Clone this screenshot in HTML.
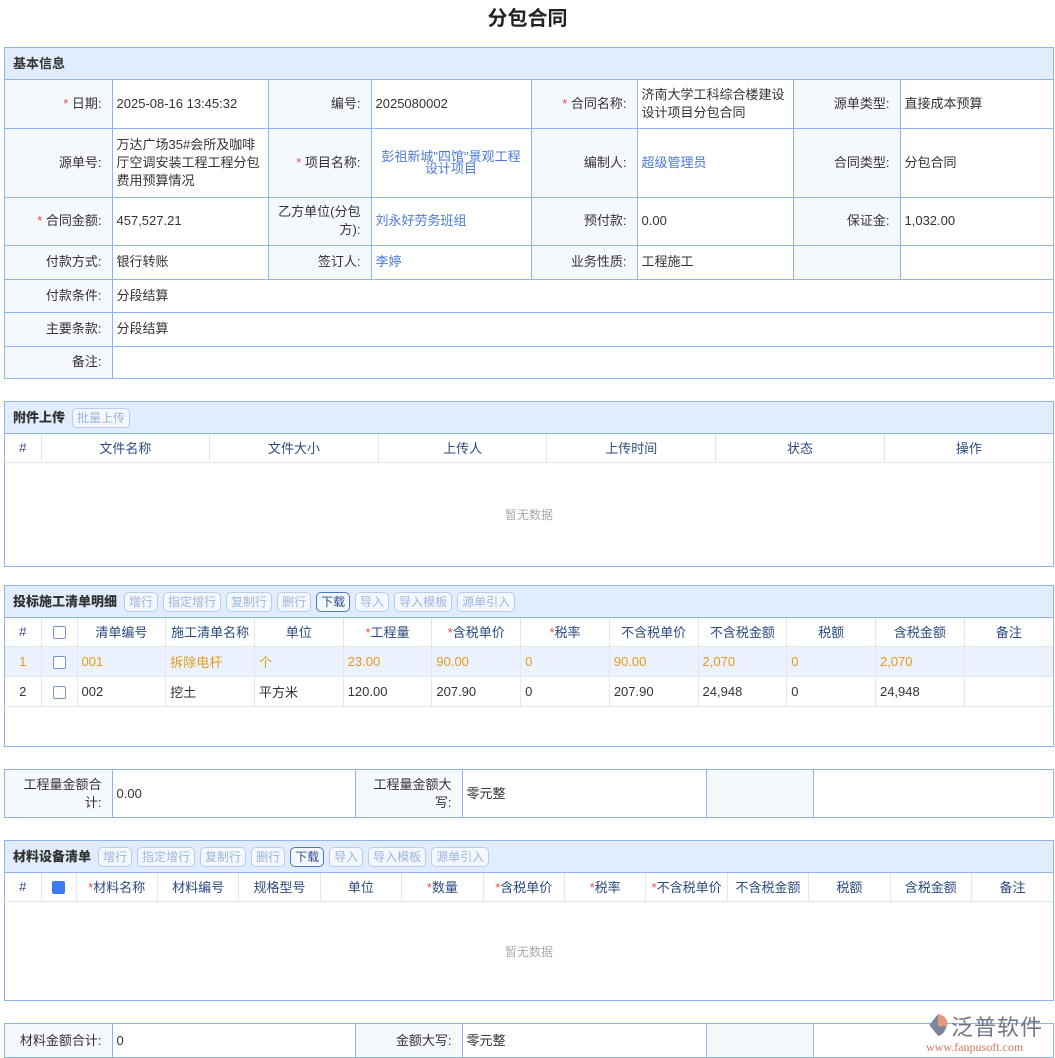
<!DOCTYPE html>
<html><head><meta charset="utf-8"><style>
*{box-sizing:border-box;margin:0;padding:0}
body{width:1055px;height:1058px;background:#fff;font-family:"Liberation Sans","Noto Sans CJK SC",sans-serif;font-size:13px;color:#333;position:relative;overflow:hidden}
.title{position:absolute;top:2px;left:0;width:1055px;text-align:center;font-size:20px;font-weight:bold;color:#222}
.box{position:absolute;left:4px;width:1050px;border:1px solid #8fb4ef}
.hd{height:32px;background:#e1ecfd;border-bottom:1px solid #8fb4ef;font-weight:bold;font-size:13px;padding-left:8px;line-height:31px;display:flex;align-items:center;gap:5px}
.hd b{margin-right:2px}
.btn{font-weight:normal;font-size:12px;color:#9bb6e0;border:1px solid #b6cdf0;border-radius:5px;height:20px;line-height:18px;padding:0 4px;background:#f4f8fe}
.btn.on{color:#2c4f88;border-color:#4d79c2}
table{border-collapse:collapse;table-layout:fixed;width:100%}
.f td{border:1px solid #8fb4ef;padding:0 4px;line-height:18px}
.f tr:first-child td{border-top:none}
.f tr:last-child td{border-bottom:none}
.f td:first-child{border-left:none}
.f td:last-child{border-right:none}
.f td.l{background:#f5f8fd;text-align:right;padding-right:10px}
.s{color:#f04848}
.bl{color:#4b7bd8}
.g th,.g td{border:1px solid #e3e6ea;font-weight:normal;padding:0 4px;text-align:left}
.g th{color:#2c4a80;text-align:center;height:28px}
.g tr th:first-child,.g tr td:first-child{border-left:none}
.g tr th:last-child,.g tr td:last-child{border-right:none}
.g tr:first-child th{border-top:none}
.g td{height:30px}
.o td{background:#ebf2fe;color:#e49a1c}
.cb{display:inline-block;width:13px;height:13px;border:1px solid #7894cc;border-radius:2px;vertical-align:middle;background:#fff}
.g td.empty{text-align:center;color:#aaa;font-size:12px;border:none}
</style></head><body>
<div class="title">分包合同</div>

<div class="box" style="top:47px;height:332px">
<div class="hd">基本信息</div>
<table class="f">
<colgroup><col style="width:107px"><col style="width:156px"><col style="width:103px"><col style="width:160px"><col style="width:106px"><col style="width:156px"><col style="width:107px"><col></colgroup>
<tr style="height:48px"><td class="l"><span class="s">* </span>日期:</td><td>2025-08-16 13:45:32</td><td class="l">编号:</td><td>2025080002</td><td class="l"><span class="s">* </span>合同名称:</td><td>济南大学工科综合楼建设设计项目分包合同</td><td class="l">源单类型:</td><td>直接成本预算</td></tr>
<tr style="height:69px"><td class="l">源单号:</td><td>万达广场35#会所及咖啡厅空调安装工程工程分包费用预算情况</td><td class="l"><span class="s">* </span>项目名称:</td><td class="bl" style="text-align:center;line-height:12px">彭祖新城"四馆"景观工程设计项目</td><td class="l">编制人:</td><td class="bl">超级管理员</td><td class="l">合同类型:</td><td>分包合同</td></tr>
<tr style="height:48px"><td class="l"><span class="s">* </span>合同金额:</td><td>457,527.21</td><td class="l">乙方单位(分包方):</td><td class="bl">刘永好劳务班组</td><td class="l">预付款:</td><td>0.00</td><td class="l">保证金:</td><td>1,032.00</td></tr>
<tr style="height:34px"><td class="l">付款方式:</td><td>银行转账</td><td class="l">签订人:</td><td class="bl">李婷</td><td class="l">业务性质:</td><td>工程施工</td><td class="l"></td><td></td></tr>
<tr style="height:33px"><td class="l">付款条件:</td><td colspan="7">分段结算</td></tr>
<tr style="height:34px"><td class="l">主要条款:</td><td colspan="7">分段结算</td></tr>
<tr style="height:32px"><td class="l">备注:</td><td colspan="7"></td></tr>
</table></div>

<div class="box" style="top:401px;height:166px">
<div class="hd"><b>附件上传</b><span class="btn">批量上传</span></div>
<table class="g"><colgroup><col style="width:36px"><col><col><col><col><col><col></colgroup>
<tr><th>#</th><th>文件名称</th><th>文件大小</th><th>上传人</th><th>上传时间</th><th>状态</th><th>操作</th></tr>
<tr><td colspan="7" class="empty" style="height:104px">暂无数据</td></tr></table></div>

<div class="box" style="top:585px;height:162px">
<div class="hd"><b>投标施工清单明细</b><span class="btn">增行</span><span class="btn">指定增行</span><span class="btn">复制行</span><span class="btn">删行</span><span class="btn on">下载</span><span class="btn">导入</span><span class="btn">导入模板</span><span class="btn">源单引入</span></div>
<table class="g"><colgroup><col style="width:36px"><col style="width:36px"><col><col><col><col><col><col><col><col><col><col><col></colgroup>
<tr><th>#</th><th><span class="cb"></span></th><th>清单编号</th><th>施工清单名称</th><th>单位</th><th><span class="s">*</span>工程量</th><th><span class="s">*</span>含税单价</th><th><span class="s">*</span>税率</th><th>不含税单价</th><th>不含税金额</th><th>税额</th><th>含税金额</th><th>备注</th></tr>
<tr class="o"><td style="text-align:center">1</td><td style="text-align:center"><span class="cb"></span></td><td>001</td><td>拆除电杆</td><td>个</td><td>23.00</td><td>90.00</td><td>0</td><td>90.00</td><td>2,070</td><td>0</td><td>2,070</td><td></td></tr>
<tr><td style="text-align:center">2</td><td style="text-align:center"><span class="cb"></span></td><td>002</td><td>挖土</td><td>平方米</td><td>120.00</td><td>207.90</td><td>0</td><td>207.90</td><td>24,948</td><td>0</td><td>24,948</td><td></td></tr>
</table></div>

<div class="box" style="top:769px;height:49px">
<table class="f"><colgroup><col style="width:107px"><col style="width:243px"><col style="width:107px"><col style="width:244px"><col style="width:107px"><col></colgroup>
<tr style="height:47px"><td class="l">工程量金额合计:</td><td>0.00</td><td class="l">工程量金额大写:</td><td>零元整</td><td class="l"></td><td></td></tr></table></div>

<div class="box" style="top:840px;height:161px">
<div class="hd"><b>材料设备清单</b><span class="btn">增行</span><span class="btn">指定增行</span><span class="btn">复制行</span><span class="btn">删行</span><span class="btn on">下载</span><span class="btn">导入</span><span class="btn">导入模板</span><span class="btn">源单引入</span></div>
<table class="g"><colgroup><col style="width:36px"><col style="width:35px"><col><col><col><col><col><col><col><col><col><col><col><col></colgroup>
<tr><th>#</th><th><span class="cb" style="background:#3d7cf0;border-color:#3d7cf0"></span></th><th><span class="s">*</span>材料名称</th><th>材料编号</th><th>规格型号</th><th>单位</th><th><span class="s">*</span>数量</th><th><span class="s">*</span>含税单价</th><th><span class="s">*</span>税率</th><th><span class="s">*</span>不含税单价</th><th>不含税金额</th><th>税额</th><th>含税金额</th><th>备注</th></tr>
<tr><td colspan="14" class="empty" style="height:100px">暂无数据</td></tr></table></div>

<div class="box" style="top:1023px;height:35px">
<table class="f"><colgroup><col style="width:107px"><col style="width:243px"><col style="width:107px"><col style="width:244px"><col style="width:107px"><col></colgroup>
<tr style="height:33px"><td class="l">材料金额合计:</td><td>0</td><td class="l">金额大写:</td><td>零元整</td><td class="l"></td><td></td></tr></table></div>

<div style="position:absolute;left:926px;top:1010px;width:129px;height:46px">
<svg width="24" height="24" style="position:absolute;left:0;top:3px" viewBox="0 0 22 22"><path d="M11 1 L3 11 L11 21 Z" fill="#7d8598"/><path d="M11 1 C18 2 21 8 19 12 L11 12 Z" fill="#e4997a"/><path d="M11 12 L19 12 C17 18 14 21 11 21 Z" fill="#7d8598"/></svg>
<div style="position:absolute;left:25px;top:0;font-size:22px;color:#6f7585;letter-spacing:1px;white-space:nowrap">泛普软件</div>
<div style="position:absolute;left:0;top:30px;font-family:'Liberation Serif',serif;font-size:12px;color:#d07a5a;white-space:nowrap">www.fanpusoft.com</div>
</div>
</body></html>
